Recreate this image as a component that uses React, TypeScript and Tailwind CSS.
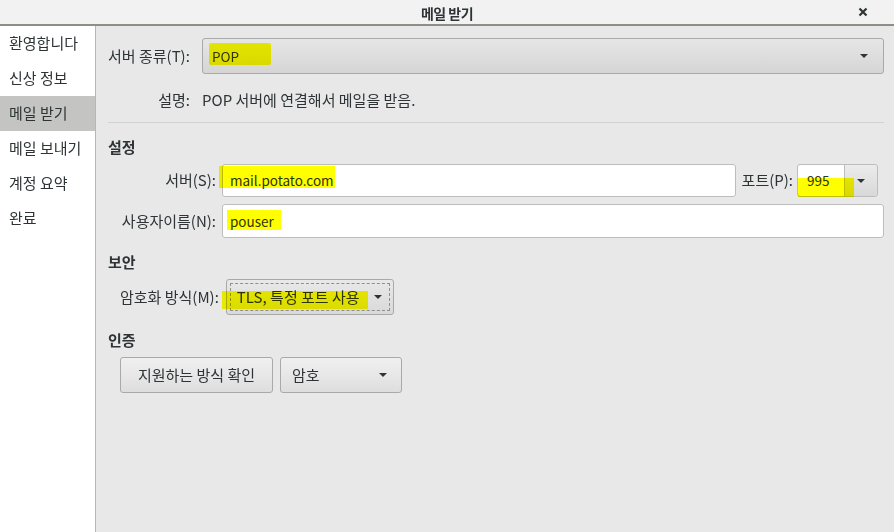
import React from "react";

const Arrow = () => (
  <svg width="10" height="6" viewBox="0 0 10 6" className="shrink-0">
    <path d="M1 1 L9 1 L5 5 Z" fill="#2e3436" />
  </svg>
);

const Mark = ({ className }: { className: string }) => (
  <span className={"absolute bg-[#ffff00] mix-blend-multiply pointer-events-none " + className} />
);

export default function App() {
  const sidebar = ["환영합니다", "신상 정보", "메일 받기", "메일 보내기", "계정 요약", "완료"];
  return (
    <div className="w-[894px] h-[532px] flex flex-col overflow-hidden text-[15px] text-[#2e3436] font-['Noto_Sans_CJK_KR','Noto_Sans',sans-serif]">
      {/* title bar */}
      <div className="h-[26px] shrink-0 bg-[#f2f2f2] border-b-2 border-[#8e8e89] relative flex items-center justify-center">
        <div className="font-bold text-[14px] leading-5 pt-px tracking-[-0.5px]">메일 받기</div>
        <div className="absolute right-[26px] top-0 h-full flex items-center">
          <svg width="10" height="10" viewBox="0 0 10 10">
            <path d="M1.5 1.5 L8.5 8.5 M8.5 1.5 L1.5 8.5" stroke="#2e3436" strokeWidth="2.2" />
          </svg>
        </div>
      </div>

      <div className="flex flex-1 min-h-0">
        {/* sidebar */}
        <div className="w-[96px] shrink-0 bg-white border-r border-[#b6b6b3] flex flex-col">
          {sidebar.map((s, i) => (
            <div
              key={s}
              className={
                "h-[35px] flex items-center px-[9px] " + (i === 2 ? "bg-[#c4c5c3]" : "")
              }
            >
              {s}
            </div>
          ))}
        </div>

        {/* main */}
        <div className="flex-1 bg-[#e8e8e8] pl-3 pr-[10px] pt-3 flex flex-col">
          <div className="flex items-center gap-3">
            <div className="w-[82px] shrink-0 whitespace-nowrap">서버 종류(T):</div>
            <div className="relative flex-1 h-[36px] rounded-[3px] border border-[#a9a9a7] bg-linear-to-b from-[#e6e6e6] to-[#d5d5d5] flex items-center pl-[9px] pr-[14px]">
              <span className="flex-1 text-[13.5px]">POP</span>
              <Arrow />
              <Mark className="left-[6px] top-[4px] w-[62px] h-[22px] rounded-[2px]" />
            </div>
          </div>

          <div className="mt-4 h-5 flex items-center gap-3">
            <div className="w-[82px] shrink-0 text-right">설명:</div>
            <div>POP 서버에 연결해서 메일을 받음.</div>
          </div>

          <div className="mt-3 h-px bg-[#d2d2d0]" />

          <div className="mt-[14px] h-5 leading-5 font-bold">설정</div>
          <div className="mt-[7px] pl-3 grid grid-cols-[96px_1fr] gap-x-[6px] gap-y-[7px] items-center">
            <div className="text-right whitespace-nowrap">서버(S):</div>
            <div className="flex items-center mr-[6px]">
              <div className="relative flex-1 h-[33px] bg-white border border-[#bdbdbb] rounded-[3px] flex items-center pl-[7px] text-[13.5px]">
                mail.potato.com
                <Mark className="-left-[4px] top-[1px] w-[116px] h-[22px]" />
              </div>
              <div className="ml-[6px] mr-[4px] whitespace-nowrap">포트(P):</div>
              <div className="relative w-[81px] h-[33px] rounded-[3px] border border-[#bdbdbb] flex">
                <div className="flex-1 bg-white rounded-l-[3px] flex items-center pl-[9px] text-[13.5px]">995</div>
                <div className="w-[33px] border-l border-[#bdbdbb] bg-linear-to-b from-[#ececec] to-[#d8d8d8] rounded-r-[3px] flex items-center justify-center">
                  <Arrow />
                </div>
                <Mark className="left-0 top-[13px] w-[56px] h-[19px]" />
              </div>
            </div>
            <div className="text-right whitespace-nowrap">사용자이름(N):</div>
            <div className="relative h-[34px] bg-white border border-[#bdbdbb] rounded-[3px] flex items-center pl-[7px] text-[13.5px]">
              pouser
              <Mark className="left-[4px] top-[5px] w-[54px] h-[20px]" />
            </div>
          </div>

          <div className="mt-[14px] h-5 leading-5 font-bold">보안</div>
          <div className="mt-[7px] pl-3 flex items-center gap-[7px]">
            <div className="whitespace-nowrap">암호화 방식(M):</div>
            <div className="relative w-[168px] h-[36px] rounded-[3px] border border-[#a9a9a7] bg-linear-to-b from-[#e9e9e9] to-[#d9d9d9] p-[3px] flex">
              <div className="flex-1 border border-dashed border-[#8f8f8f] flex items-center pl-[6px] pr-[6px]">
                <span className="flex-1 whitespace-nowrap">TLS, 특정 포트 사용</span>
                <Arrow />
              </div>
              <Mark className="-left-[5px] top-[11px] w-[146px] h-[18px]" />
            </div>
          </div>

          <div className="mt-[15px] h-5 leading-5 font-bold">인증</div>
          <div className="mt-[7px] pl-3 flex items-center gap-[7px]">
            <div className="w-[153px] h-[36px] rounded-[3px] border border-[#a9a9a7] bg-linear-to-b from-[#f0f0f0] to-[#dedede] flex items-center justify-center whitespace-nowrap">
              지원하는 방식 확인
            </div>
            <div className="w-[122px] h-[36px] rounded-[3px] border border-[#a9a9a7] bg-linear-to-b from-[#f0f0f0] to-[#dedede] flex items-center pl-[11px] pr-[13px]">
              <span className="flex-1">암호</span>
              <Arrow />
            </div>
          </div>
        </div>
      </div>
    </div>
  );
}
